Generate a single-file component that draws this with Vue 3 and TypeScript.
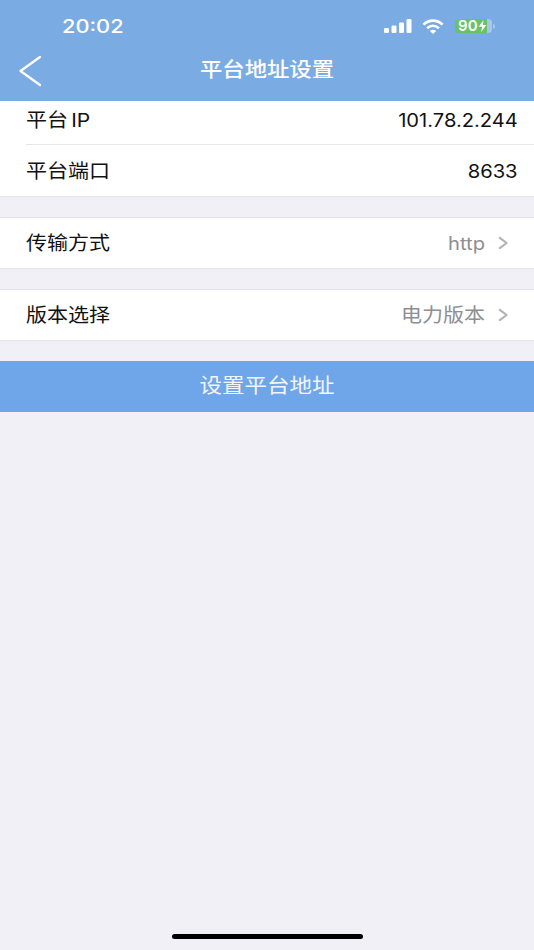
<script setup lang="ts">
interface Row {
  label: string
  value: string
  cjk?: boolean
}
const address: Row[] = [
  { label: '平台 IP', value: '101.78.2.244' },
  { label: '平台端口', value: '8633' },
]
const transport: Row = { label: '传输方式', value: 'http' }
const version: Row = { label: '版本选择', value: '电力版本', cjk: true }
const groups: Row[][] = [[transport], [version]]
</script>

<template>
  <div class="page">
    <header class="nav">
      <div class="status">
        <span class="time">20:02</span>
        <div class="indicators">
          <svg class="signal" width="28" height="14" viewBox="0 0 28 14">
            <rect x="0" y="9" width="5" height="5" rx="1.2" fill="#fff" />
            <rect x="7.5" y="6.5" width="5" height="7.5" rx="1.2" fill="#fff" />
            <rect x="15" y="3.5" width="5" height="10.5" rx="1.2" fill="#fff" />
            <rect x="22.5" y="0" width="5" height="14" rx="1.2" fill="#fff" />
          </svg>
          <svg class="wifi" width="22" height="15" viewBox="0 0 24 17" fill="none" stroke="#fff" stroke-width="3">
            <path d="M1.2 6.4C7.3 .4 16.7 .4 22.8 6.4" />
            <path d="M5.3 10.4C9.2 6.7 14.8 6.7 18.7 10.4" />
            <path d="M12 17 8.4 13.5C10.5 11.7 13.5 11.7 15.6 13.5Z" fill="#fff" stroke="none" />
          </svg>
          <div class="battery">
            <div class="battery-body">
              <span class="battery-text">90</span>
              <svg width="9" height="12" viewBox="0 0 9 13"><path d="M5.6 0 .4 7.4H4L3.2 13 8.6 5.3H5Z" fill="#fff" /></svg>
            </div>
            <span class="battery-rest"></span>
            <span class="battery-cap"></span>
          </div>
        </div>
      </div>
      <div class="bar">
        <svg class="back" width="24" height="32" viewBox="0 0 24 32" fill="none" stroke="#fff" stroke-width="2.2" stroke-linecap="round" stroke-linejoin="round">
          <path d="M22 2 2.5 16 22 30" />
        </svg>
        <h1 class="title">平台地址设置</h1>
      </div>
    </header>

    <section class="group">
      <div v-for="(row, i) in address" :key="row.label" class="row" :class="i === 0 ? 'row-first' : 'row-second'">
        <span class="label">{{ row.label }}</span>
        <span class="value">{{ row.value }}</span>
      </div>
    </section>

    <section v-for="group in groups" :key="group[0].label" class="group spaced">
      <div v-for="row in group" :key="row.label" class="row">
        <span class="label">{{ row.label }}</span>
        <span class="value muted" :class="{ 'value-cjk': row.cjk }">{{ row.value }}</span>
        <svg class="chevron" width="10" height="14" viewBox="0 0 10 14" fill="none" stroke="#b4b4b8" stroke-width="2.2" stroke-linecap="round" stroke-linejoin="round">
          <path d="M1.8 1.8 8.6 7 1.8 12.2" />
        </svg>
      </div>
    </section>

    <button class="submit" type="button"><span class="submit-text">设置平台地址</span></button>

    <div class="home-wrap"><span class="home"></span></div>
  </div>
</template>

<style>
html, body { margin: 0; padding: 0; }
</style>

<style scoped>
.page {
  width: 534px;
  height: 950px;
  background: #f0f0f6;
  display: flex;
  flex-direction: column;
  overflow: hidden;
  font-family: "Inter", "Noto Sans CJK SC", sans-serif;
  color: #111;
}
.nav {
  height: 101px;
  flex: none;
  background: #7babe3;
  color: #fff;
  display: flex;
  flex-direction: column;
}
.status {
  height: 50px;
  display: flex;
  align-items: center;
  justify-content: space-between;
  padding: 2px 39px 0 62px;
  box-sizing: border-box;
}
.time {
  font-size: 18px;
  font-weight: 500;
  transform: scaleX(1.21);
  transform-origin: left center;
}
.indicators {
  display: flex;
  align-items: center;
}
.wifi {
  margin: 0 11px 0 10px;
}
.battery {
  display: flex;
  align-items: center;
}
.battery-body {
  width: 32px;
  height: 14px;
  background: #65c466;
  border-radius: 4px 0 0 4px;
  display: flex;
  align-items: center;
  justify-content: flex-end;
}
.battery-text {
  font-size: 15px;
  font-weight: 600;
  line-height: 14px;
  letter-spacing: 0.3px;
}
.battery-rest {
  width: 5px;
  height: 14px;
  background: #a9c6ea;
  border-radius: 0 4px 4px 0;
}
.battery-cap {
  width: 2px;
  height: 5px;
  margin-left: 1px;
  background: #a9c6ea;
  border-radius: 0 2px 2px 0;
}
.bar {
  height: 51px;
  position: relative;
  display: flex;
  align-items: center;
  justify-content: center;
  padding-bottom: 14px;
  box-sizing: border-box;
}
.back {
  position: absolute;
  left: 18px;
  top: 5px;
}
.title {
  margin: 0;
  font-size: 20px;
  font-weight: 500;
  transform: scaleX(1.117);
}
.group {
  background: #fff;
  border-bottom: 1px solid #e3e3e8;
  flex: none;
}
.spaced {
  margin-top: 20px;
  border-top: 1px solid #e3e3e8;
}
.row {
  height: 50px;
  display: flex;
  align-items: center;
  padding: 0 16px 0 26px;
  box-sizing: border-box;
}
.row-first {
  height: 44px;
  position: relative;
  padding-bottom: 6px;
}
.row-first::after {
  content: "";
  position: absolute;
  left: 26px;
  right: 0;
  bottom: 0;
  height: 1px;
  background: #e6e6ea;
}
.row-second {
  height: 51px;
  padding-top: 1px;
}
.label {
  flex: 1;
  font-size: 19px;
  padding-bottom: 4px;
  word-spacing: -2.5px;
  transform: scaleX(1.105);
  transform-origin: left center;
}
.value {
  font-size: 18px;
  transform: scaleX(1.12);
  transform-origin: right center;
}
.muted {
  color: #8e8e93;
}
.value-cjk {
  font-size: 19px;
  padding-bottom: 4px;
  transform: scaleX(1.105);
}
.chevron {
  margin-left: 13px;
  margin-right: 10px;
}
.submit {
  margin-top: 20px;
  height: 51px;
  flex: none;
  border: 0;
  padding: 0 0 4px;
  background: #6fa5e9;
  color: #f2f6fc;
  font-family: inherit;
  font-size: 20px;
}
.submit-text {
  display: inline-block;
  transform: scaleX(1.125);
}
.home-wrap {
  margin-top: auto;
  height: 16px;
  flex: none;
  display: flex;
  justify-content: center;
}
.home {
  width: 191px;
  height: 5px;
  background: #000;
  border-radius: 3px;
}
</style>
